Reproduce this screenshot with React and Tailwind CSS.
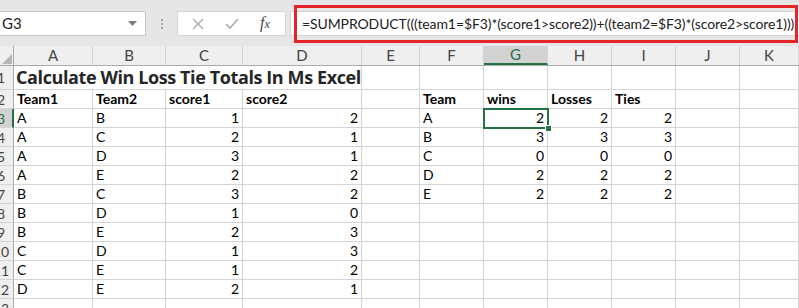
import React from 'react';

const COLS = ['A', 'B', 'C', 'D', 'E', 'F', 'G', 'H', 'I', 'J', 'K'];
const GRID = 'grid grid-cols-[14px_79px_73px_77px_119px_58px_64px_64px_64px_64px_64px_1fr]';

const games = [
  ['A', 'B', 1, 2],
  ['A', 'C', 2, 1],
  ['A', 'D', 3, 1],
  ['A', 'E', 2, 2],
  ['B', 'C', 3, 2],
  ['B', 'D', 1, 0],
  ['B', 'E', 2, 3],
  ['C', 'D', 1, 3],
  ['C', 'E', 1, 2],
  ['D', 'E', 2, 1],
];

const totals = [
  ['A', 2, 2, 2],
  ['B', 3, 3, 3],
  ['C', 0, 0, 0],
  ['D', 2, 2, 2],
  ['E', 2, 2, 2],
];

function RowHead({ n, active }) {
  return (
    <div
      className={
        'overflow-hidden flex items-center border-b border-[#d4d4d4] ' +
        (active ? 'bg-[#d2d2d2] border-r-2 border-r-[#217346] text-[#217346]' : 'bg-[#efefef] border-r border-r-[#ababab] text-[#444]')
      }
    >
      <div className="w-[26px] -ml-[12px] shrink-0 text-center">{n}</div>
    </div>
  );
}

function Cell({ v, num, bold, selected }) {
  return (
    <div
      className={
        'relative flex items-end px-[3px] pb-[1px] border-r border-b border-[#d4d4d4] whitespace-nowrap ' +
        (num ? 'justify-end ' : '') +
        (bold ? 'font-bold' : '')
      }
    >
      {v}
      {selected && (
        <div className="absolute z-10 -left-[1px] -top-[1px] w-[66px] h-[21px] border-2 border-[#217346]">
          <div className="absolute -right-[5px] -bottom-[5px] w-[7px] h-[7px] bg-[#217346] border border-white" />
        </div>
      )}
    </div>
  );
}

export default function App() {
  const rows = [];
  for (let i = 0; i < 11; i++) {
    const r = i + 2;
    const g = i === 0 ? null : games[i - 1];
    let left;
    if (i === 0) {
      left = [
        <Cell key="a" v="Team1" bold />,
        <Cell key="b" v="Team2" bold />,
        <Cell key="c" v="score1" bold />,
        <Cell key="d" v="score2" bold />,
      ];
    } else {
      left = [
        <Cell key="a" v={g[0]} />,
        <Cell key="b" v={g[1]} />,
        <Cell key="c" v={g[2]} num />,
        <Cell key="d" v={g[3]} num />,
      ];
    }
    let right;
    if (i === 0) {
      right = [
        <Cell key="f" v="Team" bold />,
        <Cell key="g" v="wins" bold />,
        <Cell key="h" v="Losses" bold />,
        <Cell key="i" v="Ties" bold />,
      ];
    } else if (i <= 5) {
      const t = totals[i - 1];
      right = [
        <Cell key="f" v={t[0]} />,
        <Cell key="g" v={t[1]} num selected={i === 1} />,
        <Cell key="h" v={t[2]} num />,
        <Cell key="i" v={t[3]} num />,
      ];
    } else {
      right = [<Cell key="f" />, <Cell key="g" />, <Cell key="h" />, <Cell key="i" />];
    }
    rows.push(
      <div key={r} className={GRID + ' h-[19px]'}>
        <RowHead n={r} active={r === 3} />
        {left}
        <Cell />
        {right}
        <Cell />
        <Cell />
      </div>
    );
  }

  return (
    <div className="relative w-[799px] h-[308px] overflow-hidden bg-white text-black text-[14px] leading-[17px] font-['Lato',sans-serif]">
      {/* formula bar */}
      <div className="h-[46px] bg-[#e6e6e6] flex items-start pt-[11px]">
        <div className="shrink-0 w-[146px] h-[25px] bg-white border border-l-0 border-[#c6c6c6] flex items-center justify-between pl-[2px] pr-[8px] text-[15px]">
          <span className="text-[#222]">G3</span>
          <svg width="9" height="5" viewBox="0 0 9 5">
            <polygon points="0,0 9,0 4.5,5" fill="#7b7b7b" />
          </svg>
        </div>
        <div className="shrink-0 w-[31px] h-[25px] flex flex-col items-center justify-center gap-[2px]">
          <span className="w-[2px] h-[2px] bg-[#a6a6a6]" />
          <span className="w-[2px] h-[2px] bg-[#a6a6a6]" />
          <span className="w-[2px] h-[2px] bg-[#a6a6a6]" />
        </div>
        <div className="shrink-0 w-[109px] h-[25px] bg-white border border-[#d4d4d4] flex items-center pl-[14px] gap-[21px]">
          <svg width="12" height="12" viewBox="0 0 12 12">
            <path d="M1 1 L11 11 M11 1 L1 11" stroke="#a8a8a8" strokeWidth="1.3" fill="none" />
          </svg>
          <svg width="14" height="11" viewBox="0 0 14 11">
            <path d="M1 6 L5 10 L13 1" stroke="#a8a8a8" strokeWidth="1.6" fill="none" />
          </svg>
          <span className="font-['Liberation_Serif',serif] italic text-[16px] text-[#444]">
            f<span className="text-[12px]">x</span>
          </span>
        </div>
        <div className="ml-[4px] min-w-0 flex-1 h-[25px] bg-white border border-r-0 border-[#d4d4d4] flex items-center pl-[11px] overflow-hidden whitespace-nowrap text-[14px] tracking-[-0.1px] text-[#222]">
          =SUMPRODUCT(((team1=$F3)*(score1&gt;score2))+((team2=$F3)*(score2&gt;score1)))
        </div>
      </div>
      {/* annotation box */}
      <div className="absolute left-[294px] top-[5px] w-[504px] h-[38px] border-[3px] border-[#e3242b]" />

      {/* column headers */}
      <div className={GRID + ' h-[20px] bg-[#efefef] border-b border-[#ababab] text-[#444] text-[15px]'}>
        <div className="relative border-r border-[#ababab]">
          <svg className="absolute right-[1px] bottom-[1px]" width="10" height="10" viewBox="0 0 10 10">
            <polygon points="10,0 10,10 0,10" fill="#b6b6b6" />
          </svg>
        </div>
        {COLS.map((c) => (
          <div
            key={c}
            className={
              'flex items-center justify-center border-r border-[#d4d4d4] ' +
              (c === 'G' ? 'bg-[#d2d2d2] text-[#217346] border-b-2 border-b-[#217346]' : '')
            }
          >
            {c}
          </div>
        ))}
      </div>

      {/* row 1 title */}
      <div className={GRID + ' h-[24px]'}>
        <RowHead n={1} />
        <div className="col-span-4 flex items-end px-[2px] pb-[1px] border-r border-b border-[#d4d4d4] whitespace-nowrap font-['Open_Sans',sans-serif] font-bold text-[18px] tracking-[-0.4px] leading-[22px] text-[#262626]">
          Calculate Win Loss Tie Totals In Ms Excel
        </div>
        {Array.from({ length: 7 }).map((_, k) => (
          <Cell key={k} />
        ))}
      </div>

      {rows}

      <div className={GRID + ' h-[19px]'}>
        <RowHead n={13} />
        {Array.from({ length: 11 }).map((_, k) => (
          <Cell key={k} />
        ))}
      </div>
    </div>
  );
}
